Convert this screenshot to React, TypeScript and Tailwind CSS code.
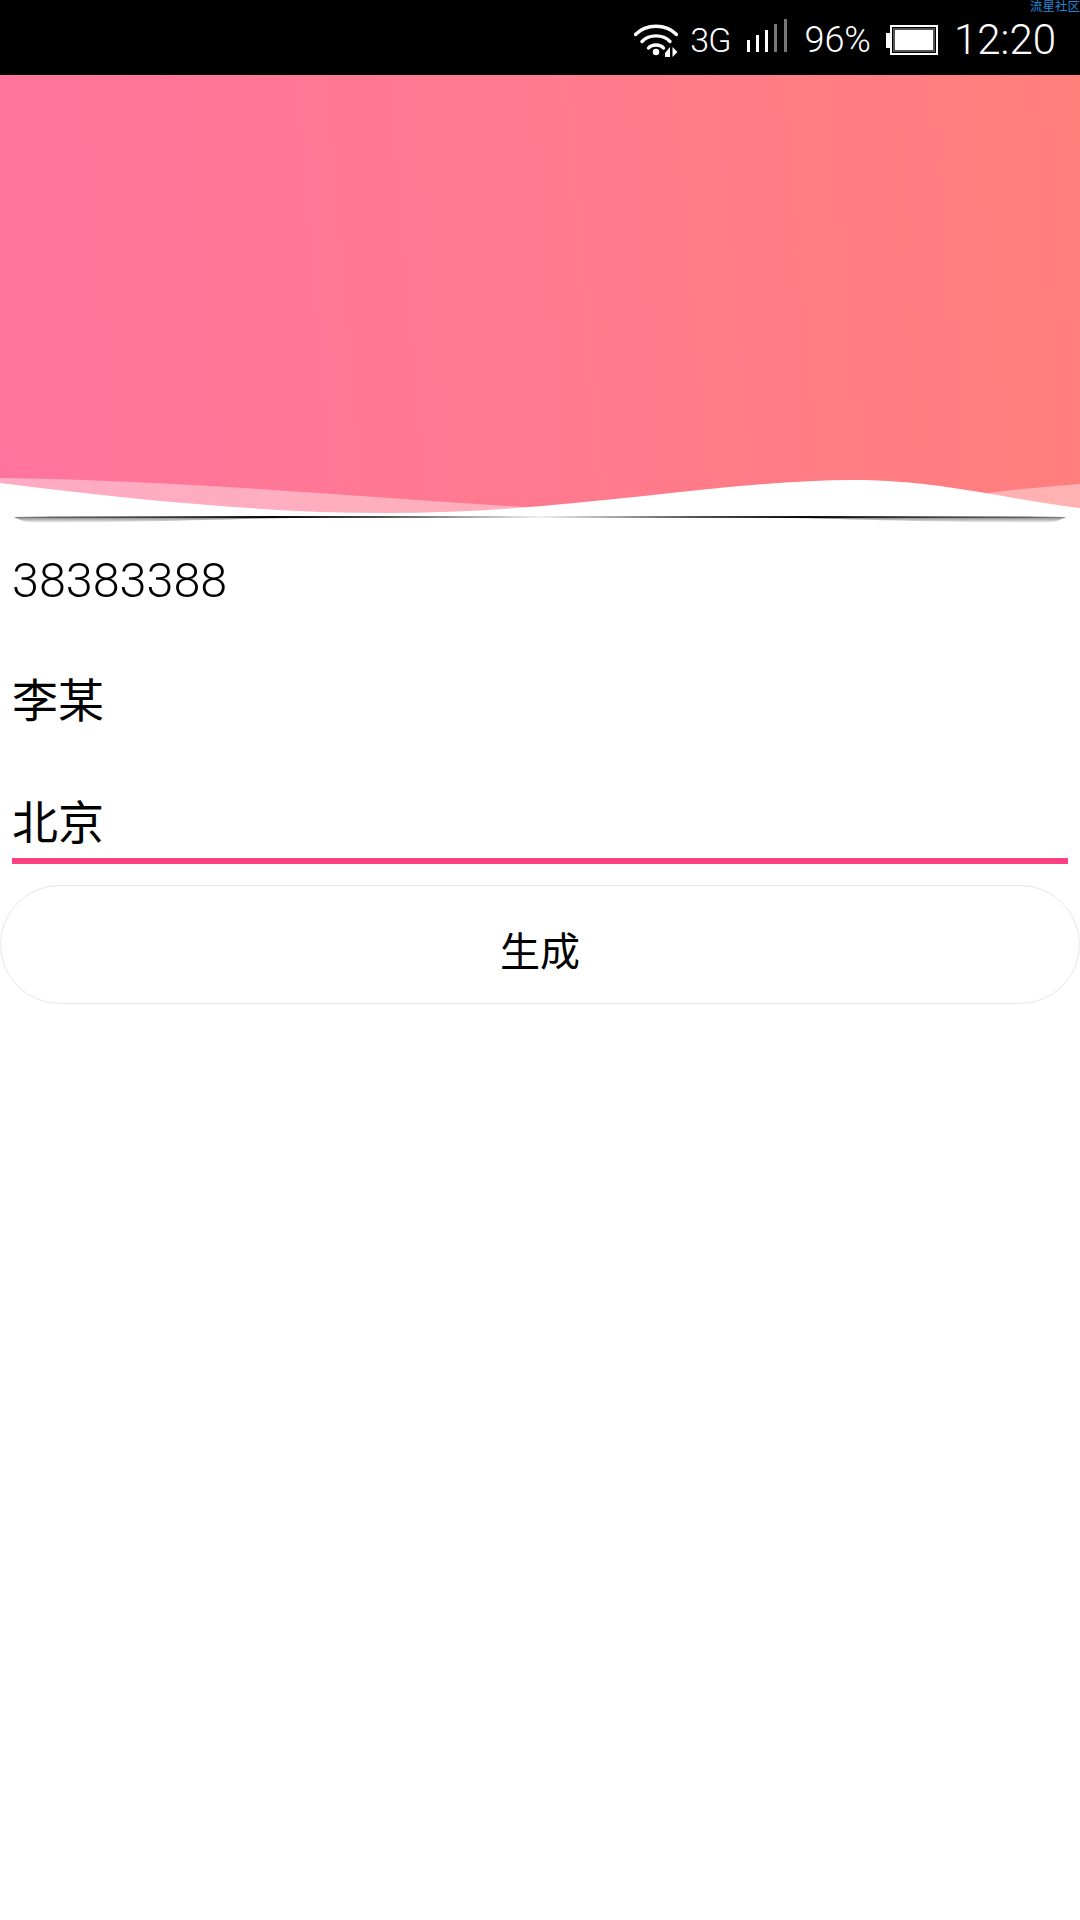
function WifiIcon() {
  return (
    <svg width="44" height="36" viewBox="0 0 44 36" fill="none" className="block">
      <path d="M1.5 12.5C12 1.5 32 1.5 42.5 12.5" stroke="#fff" strokeWidth="3.4" strokeLinecap="round" />
      <path d="M8 19.5C15 12 29 12 36 19.5" stroke="#fff" strokeWidth="3.4" strokeLinecap="round" />
      <path d="M14.5 26C18 22 26 22 29.5 26" stroke="#fff" strokeWidth="3.4" strokeLinecap="round" />
      <circle cx="22" cy="30" r="3.2" fill="#fff" />
      <path d="M31 31L36 25V35H31Z" fill="#fff" />
      <path d="M38.5 25V35L43.5 30Z" fill="#fff" />
    </svg>
  );
}

function SignalIcon() {
  return (
    <svg width="41" height="33" viewBox="0 0 41 33" className="block">
      <rect x="0" y="21" width="3" height="12" fill="#fff" />
      <rect x="9" y="16" width="3" height="17" fill="#fff" />
      <rect x="18" y="11" width="3" height="22" fill="#fff" />
      <rect x="27" y="5" width="3" height="28" fill="#777" />
      <rect x="37" y="0" width="3" height="33" fill="#777" />
    </svg>
  );
}

function BatteryIcon() {
  return (
    <svg width="52" height="30" viewBox="0 0 52 30" className="block">
      <rect x="0" y="8" width="4" height="15" fill="#fff" />
      <rect x="5" y="1" width="46" height="28" fill="none" stroke="#fff" strokeWidth="2" />
      <rect x="8" y="4" width="40" height="22" fill="#fff" stroke="#555" strokeWidth="2" />
    </svg>
  );
}

function Wave() {
  return (
    <svg
      viewBox="0 0 1080 60"
      width="1080"
      height="60"
      className="absolute bottom-0 left-0 block"
    >
      <path
        d="M0 22C170 24 350 40 523 51C700 62 850 58 995 36C1030 32 1055 30 1080 28V60H0Z"
        fill="#fff"
        fillOpacity="0.4"
      />
      <path
        d="M0 27C120 42 260 57 386 57C570 57 720 24 854 24C940 24 1010 44 1080 52V60H0Z"
        fill="#fff"
      />
    </svg>
  );
}

function WaveShadow() {
  return (
    <svg viewBox="0 0 1080 8" width="1080" height="8" className="block">
      <defs>
        <linearGradient id="line" x1="0" x2="1080" y1="0" y2="0" gradientUnits="userSpaceOnUse">
          <stop offset="0.012" stopColor="#000" stopOpacity="0" />
          <stop offset="0.05" stopColor="#000" stopOpacity="0.3" />
          <stop offset="0.14" stopColor="#000" stopOpacity="0.55" />
          <stop offset="0.25" stopColor="#000" stopOpacity="0.95" />
          <stop offset="0.35" stopColor="#000" stopOpacity="0.7" />
          <stop offset="0.5" stopColor="#000" stopOpacity="0.06" />
          <stop offset="0.65" stopColor="#000" stopOpacity="0.7" />
          <stop offset="0.75" stopColor="#000" stopOpacity="0.95" />
          <stop offset="0.86" stopColor="#000" stopOpacity="0.55" />
          <stop offset="0.95" stopColor="#000" stopOpacity="0.3" />
          <stop offset="0.988" stopColor="#000" stopOpacity="0" />
        </linearGradient>
        <linearGradient id="fade" x1="0" x2="0" y1="1" y2="7" gradientUnits="userSpaceOnUse">
          <stop offset="0" stopColor="#000" stopOpacity="0.5" />
          <stop offset="1" stopColor="#000" stopOpacity="0" />
        </linearGradient>
      </defs>
      <path d="M14 1H330C240 3 150 6 34 7C24 6 18 3 14 1Z" fill="url(#fade)" />
      <path d="M1066 1H750C840 3 930 6 1046 7C1056 6 1062 3 1066 1Z" fill="url(#fade)" />
      <rect x="12" y="0" width="1056" height="2" fill="url(#line)" />
    </svg>
  );
}

export default function App() {
  return (
    <div className="relative w-[1080px] min-h-[1920px] bg-white font-['Roboto','Noto_Sans_CJK_SC',sans-serif]">
      <div className="relative flex h-[75px] items-center justify-end bg-black pr-[24px] pt-[4px] text-white">
        <span className="absolute right-0 top-0 text-[12.5px] leading-[14px] text-[#1e88d8]">流星社区</span>
        <WifiIcon />
        <span className="ml-[12px] text-[34px] font-light leading-none tracking-[-1px]">3G</span>
        <div className="ml-[17px] -mt-[8px]">
          <SignalIcon />
        </div>
        <span className="ml-[16px] text-[36px] font-light leading-none">96%</span>
        <div className="ml-[15px]">
          <BatteryIcon />
        </div>
        <span className="ml-[16px] text-[42px] font-light leading-none">12:20</span>
      </div>

      <div className="relative h-[441px] bg-[linear-gradient(85deg,#ff749e_0%,#ff7a8e_50%,#ff7f7b_100%)]">
        <Wave />
      </div>
      <WaveShadow />

      <div className="flex flex-col px-[12px] text-black">
        <div className="flex h-[120px] items-center text-[48.5px] font-light leading-none mt-[-3px]">38383388</div>
        <div className="flex h-[120px] items-center text-[46px] font-normal leading-none">李某</div>
        <div className="h-[97px] pt-[39px] text-[46px] font-normal leading-none">北京</div>
        <div className="h-[6px] bg-[#ff4081]" />
      </div>

      <button className="mt-[21px] flex h-[119px] w-full items-center justify-center rounded-full border border-[#e6e6e6] bg-white pt-[16px] text-[40px] font-normal leading-none text-black">
        生成
      </button>
    </div>
  );
}
